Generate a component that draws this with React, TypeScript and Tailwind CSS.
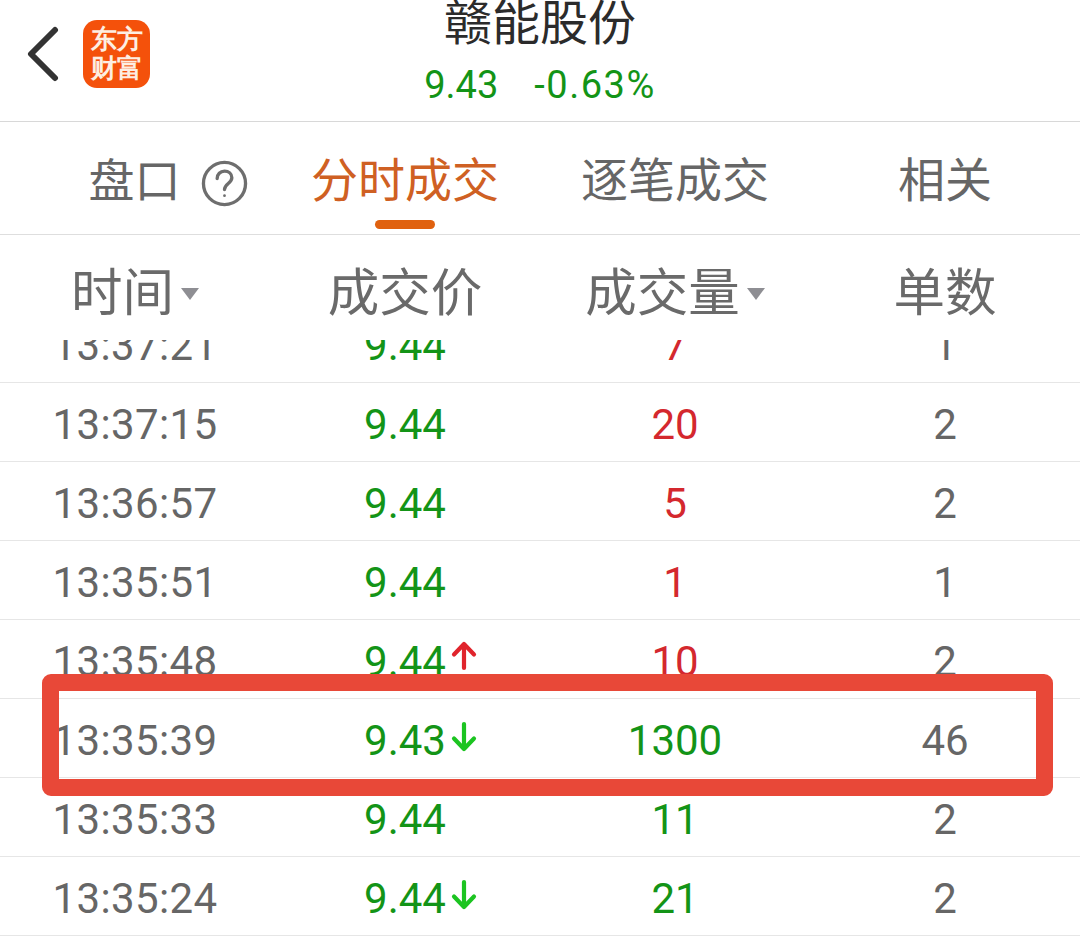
const rows = [
  { time: "13:37:21", price: "9.44", vol: "7", count: "1", up: true },
  { time: "13:37:15", price: "9.44", vol: "20", count: "2", up: true },
  { time: "13:36:57", price: "9.44", vol: "5", count: "2", up: true },
  { time: "13:35:51", price: "9.44", vol: "1", count: "1", up: true },
  { time: "13:35:48", price: "9.44", vol: "10", count: "2", up: true, arrow: "up" },
  { time: "13:35:39", price: "9.43", vol: "1300", count: "46", up: false, arrow: "down" },
  { time: "13:35:33", price: "9.44", vol: "11", count: "2", up: false },
  { time: "13:35:24", price: "9.44", vol: "21", count: "2", up: false, arrow: "down" },
];

function Arrow({ dir }: { dir: string }) {
  const up = dir === "up";
  return (
    <svg
      width="26"
      height="32"
      viewBox="0 0 26 32"
      fill="none"
      strokeWidth="4.2"
      strokeLinecap="round"
      strokeLinejoin="round"
      className={up ? "stroke-[#e0242c]" : "stroke-[#1cc421]"}
    >
      {up ? (
        <path d="M13 28V5M3 14.5L13 4l10 10.5" />
      ) : (
        <path d="M13 3v24M3 17.5L13 28l10-10.5" />
      )}
    </svg>
  );
}

function Caret({ className }: { className: string }) {
  return <span className={"h-0 w-0 border-x-[9px] border-t-[12px] border-x-transparent border-t-[#8e8e93] " + className} />;
}

export default function App() {
  return (
    <div className="relative h-[940px] w-[1080px] overflow-hidden bg-white font-['Roboto','Noto_Sans_CJK_SC',sans-serif]">
      <header className="relative flex h-[122px] flex-col items-center border-b border-[#d8d8d8]">
        <svg className="absolute left-[26px] top-[26px]" width="34" height="56" viewBox="0 0 34 56" fill="none">
          <path d="M29 4L5 28l24 24" stroke="#333" strokeWidth="6" strokeLinecap="round" strokeLinejoin="round" />
        </svg>
        <div className="absolute left-[83px] top-[20px] flex h-[68px] w-[67px] flex-col items-center justify-center rounded-[14px] bg-[#f4510b] text-[26px] font-bold leading-[29px] text-[#fdeee2] [font-family:serif]">
          <span>东方</span>
          <span>财富</span>
        </div>
        <h1 className="mt-[-6px] text-[48px] leading-[60px] text-[#2b2b2b]">赣能股份</h1>
        <div className="mt-[8px] flex gap-[36px] text-[38px] leading-[46px] text-[#139417]">
          <span>9.43</span>
          <span className="tracking-[1.5px]">-0.63%</span>
        </div>
      </header>

      <nav className="relative grid h-[113px] grid-cols-4 border-b border-[#dedede] pt-[6px] text-[47px] text-[#666]">
        <div className="flex items-center justify-center gap-[20px] pl-[66px]">
          <span className="shrink-0 text-[46px]">盘口</span>
          <svg className="mt-[4px] shrink-0" width="47" height="47" viewBox="0 0 48 48" fill="none" stroke="#6e6e6e" strokeWidth="3.4" strokeLinecap="round">
            <circle cx="24" cy="24" r="21.5" />
            <path d="M16.5 19c0-4.6 3.2-7.6 7.5-7.6s7.5 2.8 7.5 6.8c0 5.6-7.5 6-7.5 12" />
            <circle cx="24" cy="36.5" r="1.4" fill="#6e6e6e" stroke="none" />
          </svg>
        </div>
        <div className="flex items-center justify-center text-[#cf6023]">分时成交</div>
        <div className="flex items-center justify-center">逐笔成交</div>
        <div className="flex items-center justify-center">相关</div>
        <span className="absolute bottom-[5px] left-[375px] h-[9px] w-[60px] rounded-full bg-[#e0610f]" />
      </nav>

      <div className="grid h-[105px] grid-cols-4 pt-[13px] text-[51.5px] text-[#6a6a6a]">
        <div className="flex items-center justify-center">
          <span>时间</span>
          <Caret className="ml-[7px]" />
        </div>
        <div className="flex items-center justify-center">成交价</div>
        <div className="flex items-center justify-center">
          <span>成交量</span>
          <Caret className="ml-[7px]" />
        </div>
        <div className="flex items-center justify-center">单数</div>
      </div>

      <div className="h-[600px] overflow-hidden">
        <div className="mt-[-36px]">
          {rows.map((r) => (
            <div key={r.time} className="grid h-[79px] grid-cols-4 items-center border-b border-[#e6e6e6] pt-[4px] text-[42px] text-[#666]">
              <div className="text-center tracking-[0.4px]">{r.time}</div>
              <div className="relative text-center text-[#139417]">
                {r.price}
                {r.arrow && (
                  <span className={r.arrow === "up" ? "absolute left-[181px] top-[10px]" : "absolute left-[181px] top-[12px]"}>
                    <Arrow dir={r.arrow} />
                  </span>
                )}
              </div>
              <div className={r.up ? "text-center text-[#d4282e]" : "text-center text-[#139417]"}>{r.vol}</div>
              <div className="text-center">{r.count}</div>
            </div>
          ))}
        </div>
      </div>

      <div className="absolute left-[42px] top-[674px] h-[122px] w-[1011px] rounded-[9px] border-[17px] border-[#e84838]" />
    </div>
  );
}
